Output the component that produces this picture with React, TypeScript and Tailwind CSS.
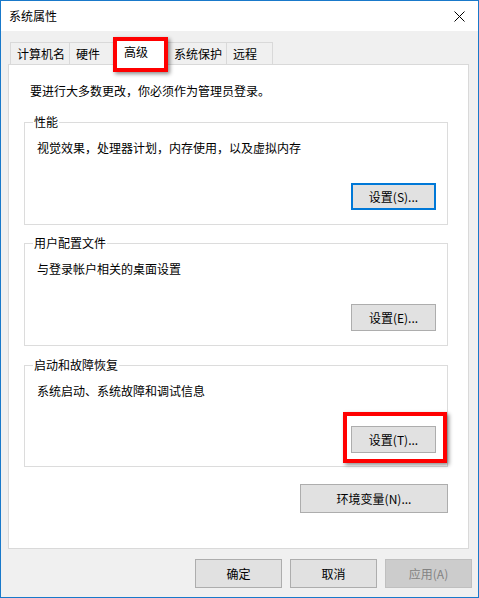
import React from "react";

const font = { fontFamily: '"Noto Sans CJK SC", "Noto Sans", sans-serif' };

function Btn({ label, className = "" }: { label: string; className?: string }) {
  return (
    <div
      className={
        "flex items-center justify-center bg-[#e1e1e1] border border-[#adadad] text-[12px] leading-[16px] text-black " +
        className
      }
    >
      {label}
    </div>
  );
}

function Group({
  title,
  desc,
  btn,
  focused,
  h,
  className = "",
}: {
  title: string;
  desc: string;
  btn: string;
  focused?: boolean;
  h: string;
  className?: string;
}) {
  return (
    <div className={"relative w-[424px] border border-[#dcdcdc] flex flex-col " + h + " " + className}>
      <span className="absolute left-[8px] -top-[9px] bg-white px-[1px] text-[12px] leading-[16px]">{title}</span>
      <div className="pl-[12px] pt-[17px] text-[12px] leading-[16px]">{desc}</div>
      <div className="flex justify-end pr-[11px] mt-[27px]">
        {focused ? (
          <div className="w-[85px] h-[27px] flex items-center justify-center bg-[#e1e1e1] border-2 border-[#0078d7] text-[12px] leading-[16px]">
            {btn}
          </div>
        ) : (
          <Btn label={btn} className="w-[85px] h-[27px]" />
        )}
      </div>
    </div>
  );
}

export default function App() {
  const tabs = [
    { name: "计算机名", w: "w-[60px]" },
    { name: "硬件", w: "w-[47px]" },
    { name: "高级", w: "w-[53px]", sel: true },
    { name: "系统保护", w: "w-[60px]" },
    { name: "远程", w: "w-[47px]" },
  ];
  return (
    <div style={font} className="relative w-[479px] h-[598px] border border-[#1979ca] bg-[#f0f0f0] flex flex-col text-black">
      {/* title bar */}
      <div className="h-[30px] bg-white flex items-center justify-between pl-[8px] pr-[10px]">
        <span className="text-[12px] leading-[16px]">系统属性</span>
        <svg width="11" height="11" viewBox="0 0 11 11" className="mr-[3px]">
          <path d="M0.5 0.5 L10.5 10.5 M10.5 0.5 L0.5 10.5" stroke="#000" strokeWidth="1" fill="none" />
        </svg>
      </div>
      {/* body */}
      <div className="flex-1 flex flex-col pl-[7px] pt-[11px]">
        <div className="h-[22px] flex items-end ml-[2px] relative z-10">
          {tabs.map((t) =>
            t.sel ? (
              <div
                key={t.name}
                className={"h-[25px] -mb-px -ml-px bg-white border border-b-0 border-[#d9d9d9] flex items-start pt-[3px] pl-[8px] text-[12px] leading-[16px] " + t.w}
              >
                {t.name}
              </div>
            ) : (
              <div
                key={t.name}
                className={"h-[22px] -ml-px first:ml-0 bg-[#f0f0f0] border border-b-0 border-[#d9d9d9] flex items-center pl-[6px] text-[12px] leading-[16px] " + t.w}
              >
                {t.name}
              </div>
            )
          )}
        </div>
        <div className="w-[461px] h-[485px] bg-white border border-[#d9d9d9] flex flex-col">
          <div className="pl-[21px] pt-[18px] text-[12px] leading-[16px]">要进行大多数更改，你必须作为管理员登录。</div>
          <div className="pl-[15px] flex flex-col">
            <Group className="mt-[23px]" h="h-[103px]" title="性能" desc="视觉效果，处理器计划，内存使用，以及虚拟内存" btn="设置(S)..." focused />
            <Group className="mt-[18px]" h="h-[103px]" title="用户配置文件" desc="与登录帐户相关的桌面设置" btn="设置(E)..." />
            <Group className="mt-[19px]" h="h-[102px]" title="启动和故障恢复" desc="系统启动、系统故障和调试信息" btn="设置(T)..." />
            <div className="w-[424px] flex justify-end mt-[17px]">
              <Btn label="环境变量(N)..." className="w-[148px] h-[29px]" />
            </div>
          </div>
        </div>
        <div className="flex justify-end gap-[8px] pr-[6px] mt-[10px]">
          <Btn label="确定" className="w-[87px] h-[29px]" />
          <Btn label="取消" className="w-[87px] h-[29px]" />
          <div className="w-[87px] h-[29px] flex items-center justify-center bg-[#cccccc] border border-[#bfbfbf] text-[#838383] text-[12px] leading-[16px]">
            应用(A)
          </div>
        </div>
      </div>
      {/* red highlight boxes */}
      <div className="absolute left-[112px] top-[36px] w-[55px] h-[35px] border-4 border-[#ff0000] shadow-[2px_2px_4px_rgba(0,0,0,0.45)] z-20" />
      <div className="absolute left-[342px] top-[411px] w-[104px] h-[51px] border-4 border-[#ff0000] shadow-[2px_2px_4px_rgba(0,0,0,0.45)] z-20" />
    </div>
  );
}
